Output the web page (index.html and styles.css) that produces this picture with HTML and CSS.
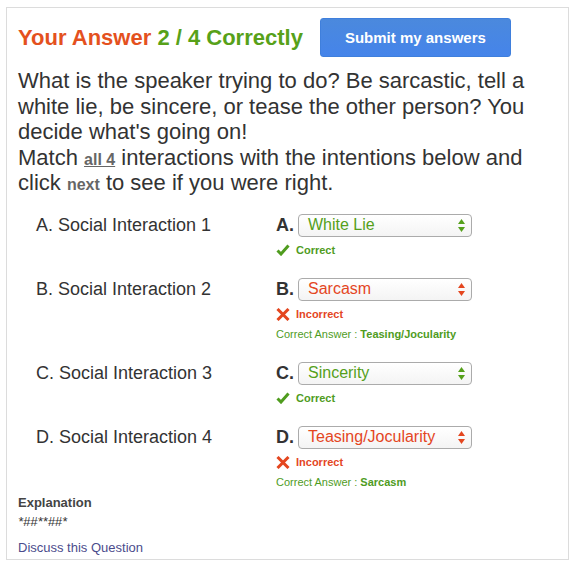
FILE: index.html
```html
<!DOCTYPE html>
<html>
<head>
<meta charset="utf-8">
<link rel="stylesheet" href="styles.css">
</head>
<body>
<div class="card">
  <div class="header">
    <h1 class="title"><span class="orange">Your Answer</span> <span class="green">2 / 4 Correctly</span></h1>
    <button class="submit">Submit my answers</button>
  </div>
  <p class="prompt">What is the speaker trying to do? Be sarcastic, tell a white lie, be sincere, or tease the other person? You decide what's going on!<br>Match <span class="all">all 4</span> interactions with the intentions below and<br>click <span class="next">next</span> to see if you were right.</p>

  <div class="rows">
    <div class="row">
      <div class="label">A. Social Interaction 1</div>
      <div class="answer">
        <div class="pick"><span class="letter">A.</span><div class="select ok"><span class="val">White Lie</span><svg class="arrows" width="7" height="13" viewBox="0 0 7 13"><polygon points="0,5 3.5,0 7,5"/><polygon points="0,8 3.5,13 7,8"/></svg></div></div>
        <div class="fb ok"><svg class="ic" width="14" height="12" viewBox="0 0 14 12"><path d="M1.5 6.5 L5 10 L12.5 1.5" fill="none" stroke="currentColor" stroke-width="3"/></svg>Correct</div>
      </div>
    </div>
    <div class="row">
      <div class="label">B. Social Interaction 2</div>
      <div class="answer">
        <div class="pick"><span class="letter">B.</span><div class="select bad"><span class="val">Sarcasm</span><svg class="arrows" width="7" height="13" viewBox="0 0 7 13"><polygon points="0,5 3.5,0 7,5"/><polygon points="0,8 3.5,13 7,8"/></svg></div></div>
        <div class="fb bad"><svg class="ic" width="14" height="13" viewBox="0 0 14 13"><path d="M1.5 1 L12.5 12 M12.5 1 L1.5 12" fill="none" stroke="currentColor" stroke-width="3"/></svg>Incorrect</div>
        <div class="ca">Correct Answer : <b>Teasing/Jocularity</b></div>
      </div>
    </div>
    <div class="row">
      <div class="label">C. Social Interaction 3</div>
      <div class="answer">
        <div class="pick"><span class="letter">C.</span><div class="select ok"><span class="val">Sincerity</span><svg class="arrows" width="7" height="13" viewBox="0 0 7 13"><polygon points="0,5 3.5,0 7,5"/><polygon points="0,8 3.5,13 7,8"/></svg></div></div>
        <div class="fb ok"><svg class="ic" width="14" height="12" viewBox="0 0 14 12"><path d="M1.5 6.5 L5 10 L12.5 1.5" fill="none" stroke="currentColor" stroke-width="3"/></svg>Correct</div>
      </div>
    </div>
    <div class="row">
      <div class="label">D. Social Interaction 4</div>
      <div class="answer">
        <div class="pick"><span class="letter">D.</span><div class="select bad"><span class="val">Teasing/Jocularity</span><svg class="arrows" width="7" height="13" viewBox="0 0 7 13"><polygon points="0,5 3.5,0 7,5"/><polygon points="0,8 3.5,13 7,8"/></svg></div></div>
        <div class="fb bad"><svg class="ic" width="14" height="13" viewBox="0 0 14 13"><path d="M1.5 1 L12.5 12 M12.5 1 L1.5 12" fill="none" stroke="currentColor" stroke-width="3"/></svg>Incorrect</div>
        <div class="ca">Correct Answer : <b>Sarcasm</b></div>
      </div>
    </div>
  </div>

  <div class="expl-title">Explanation</div>
  <div class="expl">*##**##*</div>
  <a class="discuss" href="#">Discuss this Question</a>
</div>
</body>
</html>
```

FILE: styles.css
```css
html, body {
  margin: 0;
  padding: 0;
  background: #fff;
}
body {
  font-family: "Liberation Sans", Arial, Helvetica, sans-serif;
  color: #333;
}
.card {
  box-sizing: border-box;
  margin: 7px 0 0 6px;
  width: 563px;
  height: 553px;
  border: 1px solid #dcdcdc;
  padding: 10px 11px 0 11px;
  display: flex;
  flex-direction: column;
}
.header {
  display: flex;
  align-items: center;
  height: 39px;
}
.title {
  margin: 0;
  font-size: 22px;
  font-weight: bold;
  line-height: 26px;
}
.orange { color: #e4511e; }
.green { color: #57a119; }
.submit {
  margin-left: 17px;
  width: 191px;
  height: 39px;
  border: 1px solid #3f7fdc;
  border-radius: 3px;
  background: linear-gradient(#4b89dd, #4584ea);
  color: #fff;
  font-family: "Liberation Sans", Arial, sans-serif;
  font-size: 15px;
  font-weight: bold;
  padding: 0;
}
.prompt {
  margin: 11px 0 0 0;
  font-size: 22px;
  line-height: 25.5px;
  color: #333;
}
.all {
  font-size: 16px;
  line-height: 1;
  font-weight: bold;
  color: #666;
  text-decoration: underline;
}
.next {
  font-size: 16px;
  line-height: 1;
  font-weight: bold;
  color: #666;
}
.rows {
  margin-top: 18px;
  display: flex;
  flex-direction: column;
  gap: 20px;
}
.row {
  display: grid;
  grid-template-columns: 240px 1fr;
  padding-left: 18px;
}
.label {
  font-size: 18px;
  line-height: 23px;
  color: #333;
}
.pick {
  display: flex;
  align-items: center;
  height: 23px;
}
.letter {
  font-size: 18px;
  font-weight: bold;
  color: #333;
  width: 22px;
}
.select {
  box-sizing: border-box;
  width: 174px;
  height: 23px;
  border: 1px solid #ababab;
  border-radius: 4px;
  background: linear-gradient(#ffffff, #f4f4f4);
  display: flex;
  align-items: center;
  justify-content: space-between;
  padding: 0 6px 0 9px;
  font-size: 16px;
}
.select.ok { color: #55a01b; fill: #55a01b; }
.select.bad { color: #e4461f; fill: #e4461f; }
.fb {
  margin-top: 6px;
  height: 15px;
  display: flex;
  align-items: center;
  font-size: 11px;
  font-weight: bold;
}
.fb .ic { margin-right: 6px; }
.fb.ok { color: #4f9c1e; }
.fb.bad { color: #e4461f; }
.ca {
  margin-top: 5px;
  height: 15px;
  line-height: 15px;
  font-size: 11px;
  color: #4f9c1e;
}
.expl-title {
  margin-top: 5px;
  font-size: 13px;
  font-weight: bold;
  line-height: 16px;
  color: #444;
}
.expl {
  margin-top: 3px;
  font-size: 13px;
  font-style: italic;
  line-height: 16px;
  color: #333;
}
.discuss {
  margin-top: 10px;
  font-size: 13px;
  line-height: 16px;
  color: #4b4c8c;
  text-decoration: none;
}
```
